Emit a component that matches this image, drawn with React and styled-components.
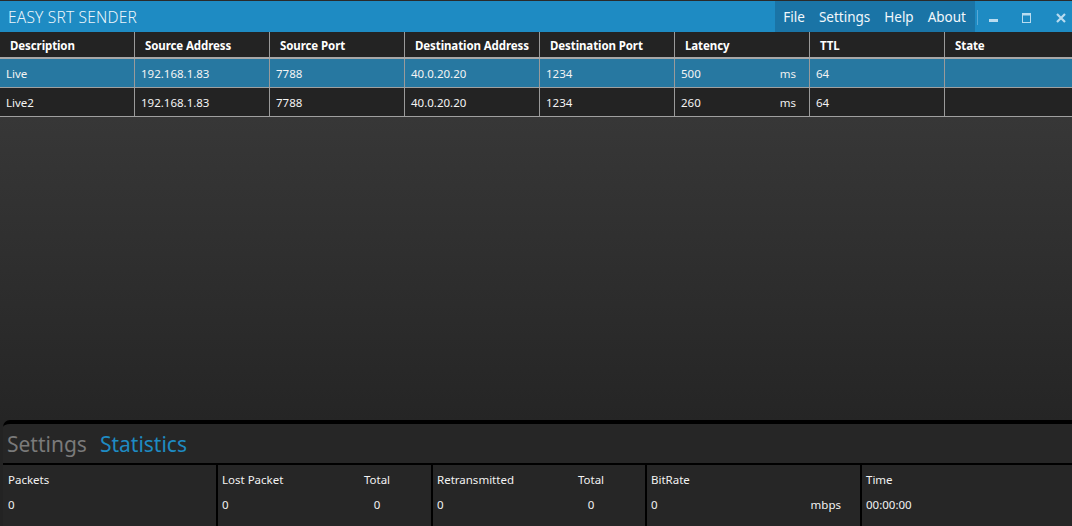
import React from "react";
import styled, { createGlobalStyle } from "styled-components";

const GlobalStyle = createGlobalStyle`
  html, body {
    margin: 0;
    padding: 0;
    background: #232323;
    overflow: hidden;
  }
  #root {
    height: 100vh;
  }
`;

const columns = [
  "Description",
  "Source Address",
  "Source Port",
  "Destination Address",
  "Destination Port",
  "Latency",
  "TTL",
  "State",
];

const rows = [
  ["Live", "192.168.1.83", "7788", "40.0.20.20", "1234", "500", "64", ""],
  ["Live2", "192.168.1.83", "7788", "40.0.20.20", "1234", "260", "64", ""],
];

export default function App() {
  return (
    <Window>
      <GlobalStyle />
      <TitleBar>
        <Title>EASY SRT SENDER</Title>
        <Menu>
          <MenuItem>File</MenuItem>
          <MenuItem>Settings</MenuItem>
          <MenuItem>Help</MenuItem>
          <MenuItem>About</MenuItem>
        </Menu>
        <Separator />
        <WindowButtons>
          <WinButton width={31}>
            <svg width="9" height="11" viewBox="0 0 9 11">
              <rect x="0" y="7" width="9" height="3" fill="#b9dcf0" />
            </svg>
          </WinButton>
          <WinButton width={34}>
            <svg width="9" height="10" viewBox="0 0 9 10">
              <rect x="0.5" y="0.5" width="8" height="9" fill="none" stroke="#b9dcf0" strokeWidth="1" />
              <rect x="0" y="0" width="9" height="2.5" fill="#b9dcf0" />
            </svg>
          </WinButton>
          <WinButton width={29} last>
            <svg width="10" height="10" viewBox="0 0 10 10">
              <path d="M1 1 L9 9 M9 1 L1 9" stroke="#b9dcf0" strokeWidth="2.2" />
            </svg>
          </WinButton>
        </WindowButtons>
      </TitleBar>

      <Grid>
        <HeaderRow>
          {columns.map((c) => (
            <HeaderCell key={c}>{c}</HeaderCell>
          ))}
        </HeaderRow>
        {rows.map((row, i) => (
          <DataRow key={i} selected={i === 0}>
            {row.map((item, j) => (
              <Cell key={j}>
                {item}
                {j === 5 && <Unit>ms</Unit>}
              </Cell>
            ))}
          </DataRow>
        ))}
      </Grid>

      <Empty />

      <BottomPanel>
        <Tabs>
          <Tab>Settings</Tab>
          <Tab active>Statistics</Tab>
        </Tabs>
        <Stats>
          <StatBox>
            <StatLine>
              <span>Packets</span>
            </StatLine>
            <StatLine>
              <span>0</span>
            </StatLine>
          </StatBox>
          <StatBox>
            <StatLine>
              <span>Lost Packet</span>
              <Right>Total</Right>
            </StatLine>
            <StatLine>
              <span>0</span>
              <Right>0</Right>
            </StatLine>
          </StatBox>
          <StatBox>
            <StatLine>
              <span>Retransmitted</span>
              <Right>Total</Right>
            </StatLine>
            <StatLine>
              <span>0</span>
              <Right>0</Right>
            </StatLine>
          </StatBox>
          <StatBox>
            <StatLine>
              <span>BitRate</span>
            </StatLine>
            <StatLine>
              <span>0</span>
              <StatUnit>mbps</StatUnit>
            </StatLine>
          </StatBox>
          <StatBox>
            <StatLine>
              <span>Time</span>
            </StatLine>
            <StatLine>
              <span>00:00:00</span>
            </StatLine>
          </StatBox>
        </Stats>
      </BottomPanel>
    </Window>
  );
}

const Window = styled.div`
  height: 100%;
  display: flex;
  flex-direction: column;
  font-family: "Noto Sans", "Open Sans", sans-serif;
  color: #ffffff;
  border-top: 1px solid #2a2a2a;
  box-sizing: border-box;
`;

const TitleBar = styled.div`
  height: 31px;
  flex-shrink: 0;
  background: #1e8bc3;
  display: flex;
  align-items: stretch;
`;

const Title = styled.div`
  flex: 1;
  display: flex;
  align-items: center;
  padding-left: 8px;
  font-size: 15.5px;
  font-weight: 300;
  letter-spacing: 0.2px;
  color: #eaf5fb;
`;

const Menu = styled.div`
  display: flex;
  align-items: center;
  background: #1a74a6;
  padding: 0 9px 0 8px;
  gap: 14px;
`;

const MenuItem = styled.div`
  font-size: 13.5px;
  color: #f2f8fc;
`;

const Separator = styled.div`
  width: 1px;
  margin: 9px 0 7px 2px;
  background: #5aa9d6;
`;

const WindowButtons = styled.div`
  display: flex;
  align-items: stretch;
`;

const WinButton = styled.div`
  width: ${(p) => p.width}px;
  box-sizing: border-box;
  display: flex;
  align-items: center;
  justify-content: ${(p) => (p.last ? "flex-end" : "center")};
  padding-right: ${(p) => (p.last ? "6px" : "0")};
  padding-top: 2px;
`;

const Grid = styled.div`
  background: #232323;
`;

const HeaderRow = styled.div`
  display: grid;
  grid-template-columns: repeat(7, 135px) 1fr;
  height: 25px;
  border-bottom: 2px solid #a8a8a8;
  background: #232323;
`;

const HeaderCell = styled.div`
  display: flex;
  align-items: center;
  padding: 1px 10px 0 10px;
  font-size: 11.5px;
  font-weight: 700;
  letter-spacing: -0.1px;
  border-right: 1px solid #9a9a9a;
  &:last-child {
    border-right: none;
  }
`;

const DataRow = styled.div`
  display: grid;
  grid-template-columns: repeat(7, 135px) 1fr;
  height: 28px;
  border-bottom: 1px solid #a0a0a0;
  background: ${(p) => (p.selected ? "#2778a1" : "#232323")};
`;

const Cell = styled.div`
  display: flex;
  align-items: center;
  justify-content: space-between;
  padding: 0 13px 0 6px;
  font-size: 11.5px;
  color: #f4f4f4;
  border-right: 1px solid #9a9a9a;
  &:last-child {
    border-right: none;
  }
`;

const Unit = styled.span`
  color: #f0f0f0;
`;

const Empty = styled.div`
  flex: 1;
  background: linear-gradient(to bottom, #373737 0%, #2f2f2f 45%, #252525 100%);
`;

const BottomPanel = styled.div`
  background: #262626;
  border-top: 4px solid #000000;
  border-top-left-radius: 7px;
  margin-left: 3px;
  height: 102px;
  display: flex;
  flex-direction: column;
`;

const Tabs = styled.div`
  display: flex;
  gap: 13px;
  align-items: center;
  height: 39px;
  padding-left: 4px;
  border-bottom: 2px solid #000000;
`;

const Tab = styled.div`
  font-size: 21px;
  color: ${(p) => (p.active ? "#1e8bc3" : "#7a7a7a")};
`;

const Stats = styled.div`
  flex: 1;
  display: grid;
  grid-template-columns: 218px 215px 214px 215px 1fr;
  margin-left: -3px;
`;

const StatBox = styled.div`
  display: flex;
  flex-direction: column;
  padding: 6px 8px 0 4px;
  gap: 8px;
  border-right: 2px solid #000000;
  &:first-child {
    padding-left: 8px;
  }
  &:last-child {
    border-right: none;
  }
`;

const StatLine = styled.div`
  display: flex;
  justify-content: space-between;
  font-size: 11.5px;
  color: #f2f2f2;
  height: 17px;
  align-items: center;
`;

const Right = styled.span`
  width: 40px;
  margin-right: 26px;
  text-align: center;
`;

const StatUnit = styled.span`
  margin-right: 11px;
`;
